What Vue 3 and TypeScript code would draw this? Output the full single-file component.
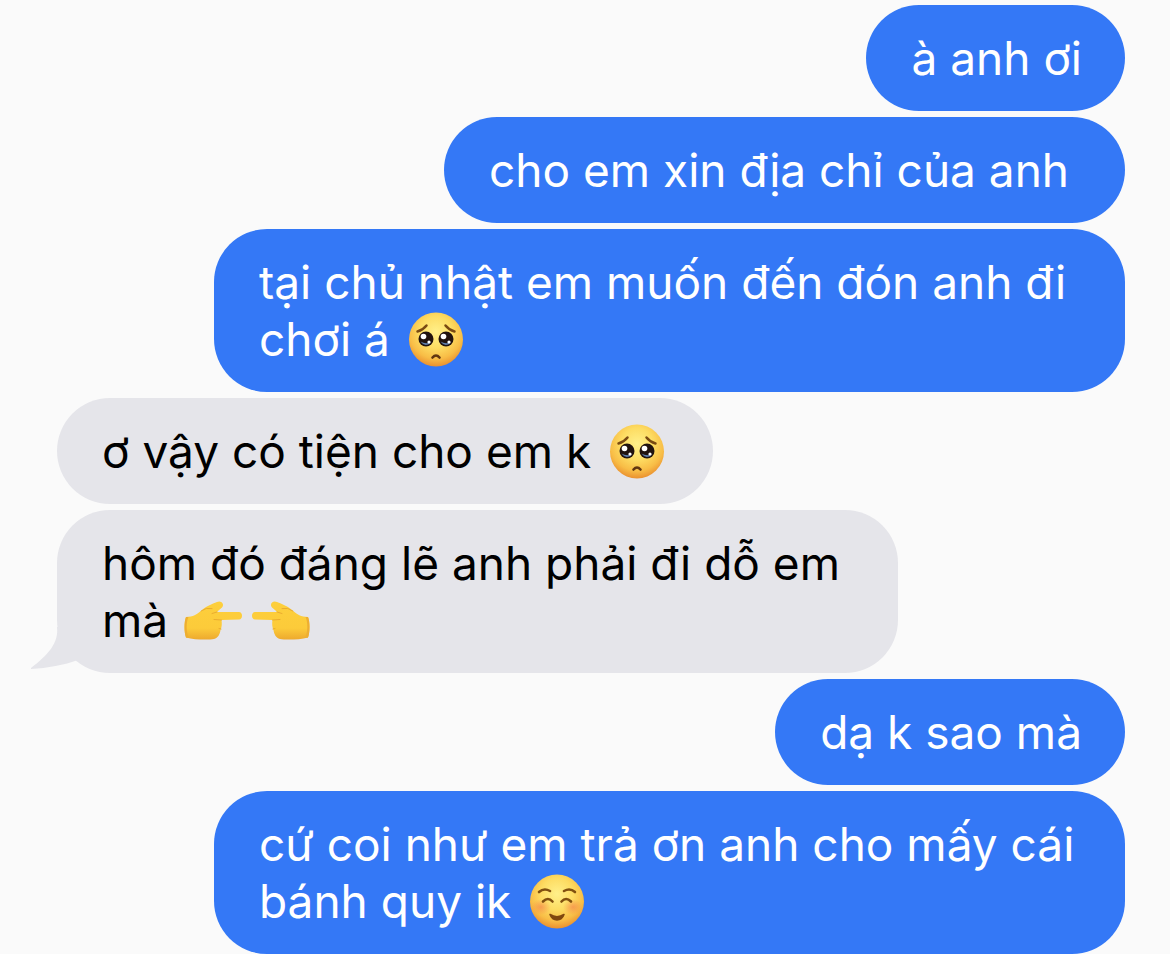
<script setup lang="ts">
type Glyph = 'pleading' | 'right' | 'left' | 'smile'

interface Message {
  id: number
  mine: boolean
  text: string
  glyphs: Glyph[]
  tail?: boolean
}

const labels: Record<Glyph, string> = {
  pleading: '🥺',
  right: '👉',
  left: '👈',
  smile: '☺️',
}

const messages: Message[] = [
  { id: 1, mine: true, text: 'à anh ơi', glyphs: [] },
  { id: 2, mine: true, text: 'cho em xin địa chỉ của anh\u00a0', glyphs: [] },
  { id: 3, mine: true, text: 'tại chủ nhật em muốn đến đón anh đi chơi á ', glyphs: ['pleading'] },
  { id: 4, mine: false, text: 'ơ vậy có tiện cho em k ', glyphs: ['pleading'] },
  { id: 5, mine: false, text: 'hôm đó đáng lẽ anh phải đi dỗ em mà ', glyphs: ['right', 'left'], tail: true },
  { id: 6, mine: true, text: 'dạ k sao mà', glyphs: [] },
  { id: 7, mine: true, text: 'cứ coi như em trả ơn anh cho mấy cái bánh quy ik ', glyphs: ['smile'] },
]
</script>

<template>
  <main class="chat">
    <svg class="defs" aria-hidden="true">
      <defs>
        <radialGradient id="face" cx="0.5" cy="0.36" r="0.66">
          <stop offset="0" stop-color="#fff08a" />
          <stop offset="0.45" stop-color="#fddc62" />
          <stop offset="0.75" stop-color="#f8bd46" />
          <stop offset="1" stop-color="#e88a2c" />
        </radialGradient>
        <radialGradient id="blush">
          <stop offset="0" stop-color="#f4764a" stop-opacity="0.55" />
          <stop offset="1" stop-color="#f4764a" stop-opacity="0" />
        </radialGradient>
        <linearGradient id="hand" x1="0" y1="0" x2="0" y2="1">
          <stop offset="0" stop-color="#fdcf3c" />
          <stop offset="0.7" stop-color="#fccb3a" />
          <stop offset="1" stop-color="#eda92e" />
        </linearGradient>
      </defs>
    </svg>
    <p
      v-for="m in messages"
      :key="m.id"
      class="bubble"
      :class="m.mine ? 'sent' : 'received'"
    >
      <svg v-if="m.tail" class="tail" viewBox="0 0 54 48" aria-hidden="true">
        <path d="M27 0 C29 16 18 28 1 41 L1 42 C18 41 34 38 48 33 L54 36 L54 0 Z" fill="#e5e5ea" />
      </svg>{{ m.text }}<svg
        v-for="g in m.glyphs"
        :key="g"
        class="emoji"
        viewBox="0 0 66 57"
        role="img"
        :aria-label="labels[g]"
      >
        <g v-if="g === 'pleading'">
          <circle cx="33" cy="28.500" r="27" fill="url(#face)" />
          <g fill="none" stroke="#7a4a12" stroke-width="2.500" stroke-linecap="round">
            <path d="M14.500 20.500 Q20 19 23.500 14.500" />
            <path d="M42.500 14.500 Q46 19 51.500 20.500" />
          </g>
          <circle cx="23" cy="28" r="7.500" fill="#21130f" />
          <circle cx="43" cy="28" r="7.500" fill="#21130f" />
          <path d="M17.500 30.500 Q22 37 28 31.500 Q22 33.500 17.500 30.500Z M37.500 30.500 Q42 37 48 31.500 Q42 33.500 37.500 30.500Z" fill="#5f7fae" />
          <g fill="#ffffff">
            <circle cx="20.500" cy="25.500" r="2.800" />
            <circle cx="26" cy="31" r="1.600" />
            <circle cx="40.500" cy="25.500" r="2.800" />
            <circle cx="46" cy="31" r="1.600" />
          </g>
          <path d="M29.500 46.500 Q33 42.500 36.500 46.500" fill="none" stroke="#613610" stroke-width="2.600" stroke-linecap="round" />
        </g>
        <g v-else-if="g === 'smile'">
          <circle cx="33" cy="28.500" r="27" fill="url(#face)" />
          <ellipse cx="17" cy="34" rx="10" ry="8" fill="url(#blush)" />
          <ellipse cx="49" cy="34" rx="10" ry="8" fill="url(#blush)" />
          <g fill="none" stroke="#80500f" stroke-width="2.600" stroke-linecap="round">
            <path d="M15 19 Q20 14.500 26 18" />
            <path d="M40 18 Q46 14.500 51 19" />
            <path d="M19 28.500 Q24 23.500 28.500 28.500" />
            <path d="M37.500 28.500 Q42 23.500 47 28.500" />
          </g>
          <path d="M26 41.500 Q33 46 40 41.500 Q38 47 33 47 Q28 47 26 41.500Z" fill="#80480f" stroke="#80480f" stroke-width="1.500" stroke-linejoin="round" />
        </g>
        <g v-else :class="{ flip: g === 'left' }">
          <path
            d="M5 25 C12 25 16 22 20 19 C25 14 31 12 36 10 C40 8 44 12 41 15.500 C39 17.500 37 18.500 36 20 L58 20 C62 20 62 27.500 58 27.500 L40.500 28 C41 31 41 35 39.500 38 C39 42 37 46 33 47 C28 48 14 48 5 45.500 C3 40 3 30 5 25Z"
            fill="url(#hand)"
          />
          <path d="M40.500 28 L33 27.500 M40 37 L38 36.500 M36 20 L31 21.500 M20 19 Q25 15 31 16.500" fill="none" stroke="#eaac2f" stroke-width="1" stroke-linecap="round" />
          <path d="M5 25 C3 30 3 40 5 45.500 L8 46 C5 40 5 30 7.500 25Z" fill="#edae32" />
        </g>
      </svg>
    </p>
  </main>
</template>

<style>
body {
  margin: 0;
  background: #fafafa;
}
</style>

<style scoped>
.chat {
  display: flex;
  flex-direction: column;
  gap: 6px;
  padding: 5px 45px 0 57px;
  font-family: Inter, "Noto Sans", sans-serif;
  font-size: 46px;
  line-height: 57px;
}

.defs {
  position: absolute;
  width: 0;
  height: 0;
}

.bubble {
  position: relative;
  box-sizing: border-box;
  margin: 0;
  padding: 25px 43px 24px 45px;
  border-radius: 53px;
}

.sent {
  align-self: flex-end;
  max-width: 85.3%;
  background: #3478f6;
  color: #ffffff;
}

.received {
  align-self: flex-start;
  max-width: 78.7%;
  background: #e5e5ea;
  color: #000000;
}

.emoji {
  width: 66px;
  height: 57px;
  vertical-align: top;
}

.flip {
  transform: translateX(66px) scaleX(-1);
}

.tail {
  position: absolute;
  left: -27px;
  bottom: -2px;
  width: 54px;
  height: 48px;
}
</style>
